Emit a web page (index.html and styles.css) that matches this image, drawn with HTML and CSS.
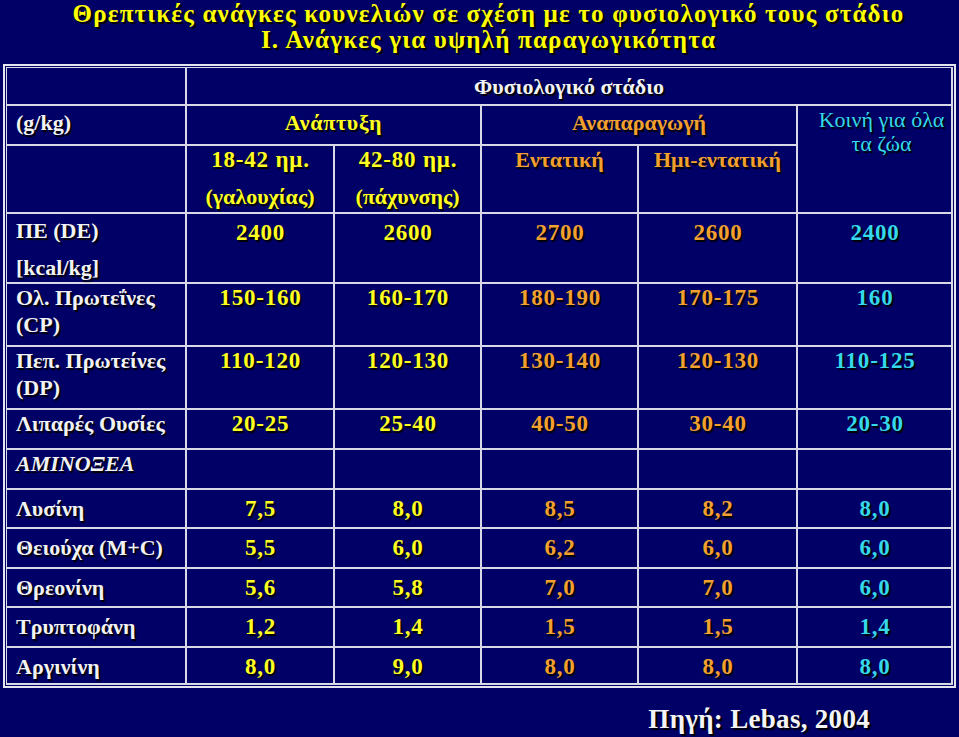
FILE: index.html
```html
<!DOCTYPE html>
<html lang="el">
<head>
<meta charset="utf-8">
<title>Θρεπτικές ανάγκες κουνελιών</title>
<link rel="stylesheet" href="styles.css">
</head>
<body>
<div class="slide">
  <header class="title">
    <div class="title-line">Θρεπτικές ανάγκες κουνελιών σε σχέση με το φυσιολογικό τους στάδιο</div>
    <div class="title-line">Ι. Ανάγκες για υψηλή παραγωγικότητα</div>
  </header>
  <div class="frame">
    <table class="grid">
      <colgroup>
        <col class="c1"><col class="c2"><col class="c3"><col class="c4"><col class="c5"><col class="c6">
      </colgroup>
      <tr class="r1">
        <td></td>
        <td colspan="5" class="w ctr">Φυσιολογικό στάδιο</td>
      </tr>
      <tr class="r2">
        <td class="w lbl">(g/kg)</td>
        <td colspan="2" class="y ctr wide">Ανάπτυξη</td>
        <td colspan="2" class="o ctr">Αναπαραγωγή</td>
        <td rowspan="2" class="cy ctr koini">Κοινή για όλα<br>τα ζώα</td>
      </tr>
      <tr class="r3">
        <td></td>
        <td class="y ctr"><div class="num">18-42 ημ.</div><div class="para">(γαλουχίας)</div></td>
        <td class="y ctr"><div class="num">42-80 ημ.</div><div class="para">(πάχυνσης)</div></td>
        <td class="o ctr">Εντατική</td>
        <td class="o ctr">Ημι-εντατική</td>
      </tr>
      <tr class="r4">
        <td class="w lbl"><div>ΠΕ (DE)</div><div class="para">[kcal/kg]</div></td>
        <td class="y ctr num">2400</td>
        <td class="y ctr num">2600</td>
        <td class="o ctr num">2700</td>
        <td class="o ctr num">2600</td>
        <td class="cy ctr num">2400</td>
      </tr>
      <tr class="r5">
        <td class="w lbl wrap">Ολ. Πρωτεΐνες<br>(CP)</td>
        <td class="y ctr num">150-160</td>
        <td class="y ctr num">160-170</td>
        <td class="o ctr num">180-190</td>
        <td class="o ctr num">170-175</td>
        <td class="cy ctr num">160</td>
      </tr>
      <tr class="r6">
        <td class="w lbl wrap">Πεπ. Πρωτείνες<br>(DP)</td>
        <td class="y ctr num">110-120</td>
        <td class="y ctr num">120-130</td>
        <td class="o ctr num">130-140</td>
        <td class="o ctr num">120-130</td>
        <td class="cy ctr num">110-125</td>
      </tr>
      <tr class="r7">
        <td class="w lbl">Λιπαρές Ουσίες</td>
        <td class="y ctr num">20-25</td>
        <td class="y ctr num">25-40</td>
        <td class="o ctr num">40-50</td>
        <td class="o ctr num">30-40</td>
        <td class="cy ctr num">20-30</td>
      </tr>
      <tr class="r8">
        <td class="w lbl ital">ΑΜΙΝΟΞΕΑ</td>
        <td></td><td></td><td></td><td></td><td></td>
      </tr>
      <tr class="r9 aa">
        <td class="w lbl">Λυσίνη</td>
        <td class="y ctr num">7,5</td>
        <td class="y ctr num">8,0</td>
        <td class="o ctr num">8,5</td>
        <td class="o ctr num">8,2</td>
        <td class="cy ctr num">8,0</td>
      </tr>
      <tr class="r10 aa">
        <td class="w lbl">Θειούχα (M+C)</td>
        <td class="y ctr num">5,5</td>
        <td class="y ctr num">6,0</td>
        <td class="o ctr num">6,2</td>
        <td class="o ctr num">6,0</td>
        <td class="cy ctr num">6,0</td>
      </tr>
      <tr class="r11 aa">
        <td class="w lbl">Θρεονίνη</td>
        <td class="y ctr num">5,6</td>
        <td class="y ctr num">5,8</td>
        <td class="o ctr num">7,0</td>
        <td class="o ctr num">7,0</td>
        <td class="cy ctr num">6,0</td>
      </tr>
      <tr class="r12 aa">
        <td class="w lbl">Τρυπτοφάνη</td>
        <td class="y ctr num">1,2</td>
        <td class="y ctr num">1,4</td>
        <td class="o ctr num">1,5</td>
        <td class="o ctr num">1,5</td>
        <td class="cy ctr num">1,4</td>
      </tr>
      <tr class="r13 aa">
        <td class="w lbl">Αργινίνη</td>
        <td class="y ctr num">8,0</td>
        <td class="y ctr num">9,0</td>
        <td class="o ctr num">8,0</td>
        <td class="o ctr num">8,0</td>
        <td class="cy ctr num">8,0</td>
      </tr>
    </table>
  </div>
  <div class="source-row">
    <div class="source">Πηγή: Lebas, 2004</div>
  </div>
</div>
</body>
</html>
```
FILE: styles.css
```css
html, body {
  margin: 0;
  padding: 0;
  background: #000066;
}
body {
  font-family: "Liberation Serif", "Times New Roman", serif;
  width: 959px;
  height: 737px;
  overflow: hidden;
}
.slide {
  width: 959px;
  height: 737px;
  background: #000066;
}
.title {
  padding: 1px 0 0 18px;
  margin-bottom: 11px;
  text-align: center;
  color: #ffff00;
  font-weight: bold;
  font-size: 25px;
  line-height: 26px;
  letter-spacing: 1.2px;
  text-shadow: 2px 2px 1px #000;
}
.frame {
  margin-left: 3px;
  width: 947px;
  border: 2px solid #e4e4ee;
  padding: 1px;
}
.grid {
  table-layout: fixed;
  width: 947px;
  border-collapse: separate;
  border-spacing: 0;
  border-top: 1px solid #d8d8e6;
  border-left: 1px solid #d8d8e6;
  font-size: 22px;
  font-weight: bold;
  line-height: 28px;
}
.c1 { width: 180px; }
.c2 { width: 148px; }
.c3 { width: 147px; }
.c4 { width: 157px; }
.c5 { width: 159px; }
.c6 { width: 155px; }
.grid td {
  box-sizing: border-box;
  border-right: 2px solid #d8d8e6;
  border-bottom: 2px solid #d8d8e6;
  vertical-align: top;
  padding: 0;
  text-shadow: 1.5px 1.5px 1px #000;
}
.r1 { height: 38px; }
.r2 { height: 40px; }
.r3 { height: 68px; }
.r4 { height: 68px; }
.r5 { height: 63px; }
.r6 { height: 63px; }
.r7 { height: 40px; }
.r8 { height: 40px; }
.r9 { height: 39px; }
.r10 { height: 40px; }
.r11 { height: 39px; }
.r12 { height: 40px; }
.r13 { height: 37px; }

.r1 td { padding-top: 5px; }
.r2 td { padding-top: 3px; }
.r2 td.koini { padding-top: 2px; padding-left: 14px; }
.r3 td { padding-top: 0; }
.r4 td { padding-top: 3px; }
.r4 td.num { padding-top: 5px; }
.aa td { padding-top: 5px; }

.lbl { padding-left: 9px !important; text-align: left; }
.wrap { line-height: 27px; }
.ctr { text-align: center; }
.ital { font-style: italic; }
.para { margin-top: 9px; letter-spacing: 0; }
.num { font-size: 23px; letter-spacing: 0.8px; text-indent: 1px; }
.wide { letter-spacing: 0.7px; }
.koini { font-weight: normal; line-height: 24px; }

.w { color: #f2f2f2; }
.y { color: #ffff22; }
.o { color: #f2a030; }
.cy { color: #36d8ea; }

.source-row {
  display: flex;
  justify-content: flex-end;
  padding-right: 89px;
  margin-top: 16px;
}
.source {
  color: #f4f4f4;
  font-weight: bold;
  font-size: 27px;
  line-height: 30px;
  letter-spacing: 0.3px;
  text-shadow: 2px 2px 1px #000;
}
```
